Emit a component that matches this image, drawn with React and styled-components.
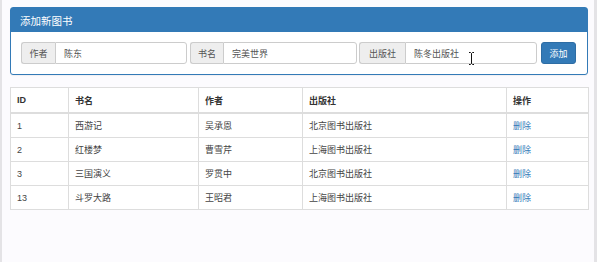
import React from "react";
import styled, { createGlobalStyle } from "styled-components";

const GlobalStyle = createGlobalStyle`
  html, body {
    margin: 0;
    padding: 0;
    background: #fcfbfe;
  }
  body {
    font-family: "Helvetica Neue", "Liberation Sans", "Noto Sans CJK SC", sans-serif;
    font-size: 9px;
    color: #333;
  }
`;

const Page = styled.div`
  position: relative;
  height: 262px;
  box-sizing: border-box;
  border-left: 2px solid #e4e3e6;
  border-right: 3px solid #e4e3e6;
  padding: 7px 7px 0 8px;
`;

const Panel = styled.div`
  width: 578px;
  border: 1px solid #337ab7;
  border-radius: 3px;
  background: #fff;
  box-sizing: border-box;
  box-shadow: 0 1px 1px rgba(0, 0, 0, 0.05);
`;

const PanelHeading = styled.div`
  height: 24px;
  background: #337ab7;
  color: #fff;
  display: flex;
  align-items: center;
  padding: 0 9px;
  font-size: 10.5px;
`;

const PanelBody = styled.div`
  display: flex;
  align-items: center;
  padding: 10px;
`;

const InputGroup = styled.div`
  display: flex;
  width: ${(p) => p.w}px;
  height: 22px;
  margin-right: ${(p) => p.gap}px;
`;

const Addon = styled.span`
  width: ${(p) => p.w}px;
  box-sizing: border-box;
  display: flex;
  align-items: center;
  justify-content: center;
  background: #eee;
  color: #555;
  border: 1px solid #ccc;
  border-right: none;
  border-radius: 3px 0 0 3px;
`;

const Input = styled.div`
  flex: 1;
  display: flex;
  align-items: center;
  padding: 0 8px;
  border: 1px solid #ccc;
  border-radius: 0 3px 3px 0;
  color: #555;
  background: #fff;
`;

const Button = styled.button`
  width: 35px;
  height: 22px;
  padding: 0;
  border: 1px solid #2e6da4;
  border-radius: 3px;
  background: #337ab7;
  color: #fff;
  font-family: inherit;
  font-size: 9px;
`;

const Table = styled.table`
  margin-top: 12px;
  width: 578px;
  table-layout: fixed;
  border-collapse: collapse;
  background: #fff;
  border: 1px solid #ddd;
`;

const Col = styled.col`
  width: ${(p) => p.w}px;
`;

const Th = styled.th`
  height: 24px;
  padding: 0 6px;
  text-align: left;
  font-weight: bold;
  border: 1px solid #ddd;
  border-bottom: 2px solid #ddd;
`;

const Td = styled.td`
  height: 23px;
  padding: 0 6px;
  border: 1px solid #ddd;
  color: #444;
`;

const Link = styled.a`
  color: #337ab7;
  text-decoration: none;
`;

const Cursor = styled.svg`
  position: absolute;
  left: 466px;
  top: 52px;
`;

const rows = [
  { id: 1, name: "西游记", author: "吴承恩", press: "北京图书出版社" },
  { id: 2, name: "红楼梦", author: "曹雪芹", press: "上海图书出版社" },
  { id: 3, name: "三国演义", author: "罗贯中", press: "北京图书出版社" },
  { id: 13, name: "斗罗大路", author: "王昭君", press: "上海图书出版社" },
];

export default function App() {
  return (
    <Page>
      <GlobalStyle />
      <Panel>
        <PanelHeading>添加新图书</PanelHeading>
        <PanelBody>
          <InputGroup w={166} gap={3}>
            <Addon w={34}>作者</Addon>
            <Input>陈东</Input>
          </InputGroup>
          <InputGroup w={167} gap={2}>
            <Addon w={33}>书名</Addon>
            <Input>完美世界</Input>
          </InputGroup>
          <InputGroup w={178} gap={4}>
            <Addon w={46}>出版社</Addon>
            <Input>陈冬出版社</Input>
          </InputGroup>
          <Button>添加</Button>
        </PanelBody>
      </Panel>
      <Table>
        <colgroup>
          <Col w={58} />
          <Col w={130} />
          <Col w={104} />
          <Col w={204} />
          <Col w={82} />
        </colgroup>
        <thead>
          <tr>
            <Th>ID</Th>
            <Th>书名</Th>
            <Th>作者</Th>
            <Th>出版社</Th>
            <Th>操作</Th>
          </tr>
        </thead>
        <tbody>
          {rows.map((r) => (
            <tr key={r.id}>
              <Td>{r.id}</Td>
              <Td>{r.name}</Td>
              <Td>{r.author}</Td>
              <Td>{r.press}</Td>
              <Td>
                <Link href="#">删除</Link>
              </Td>
            </tr>
          ))}
        </tbody>
      </Table>
      <Cursor width="7" height="13" viewBox="0 0 7 13">
        <path
          d="M1 0.5h1.5l1 1 1-1H6M3.5 1.5v10M1 12.5h1.5l1-1 1 1H6"
          fill="none"
          stroke="#111"
          strokeWidth="1"
        />
      </Cursor>
    </Page>
  );
}
